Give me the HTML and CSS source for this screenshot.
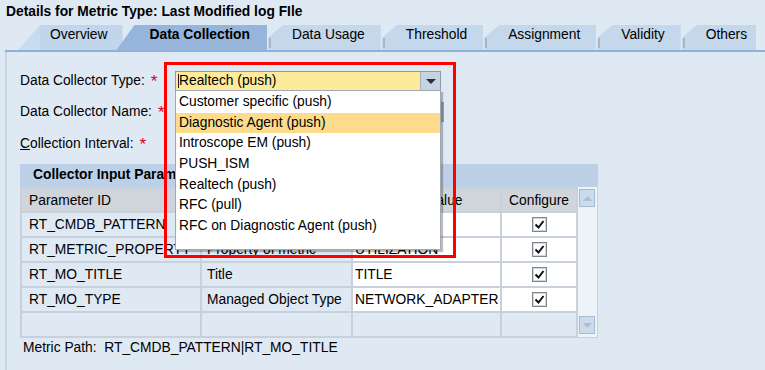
FILE: index.html
```html
<!DOCTYPE html>
<html lang="en">
<head>
    <meta charset="UTF-8">
    <title>Details for Metric Type</title>
    <link rel="stylesheet" href="styles.css">
</head>
<body>

    <h1 class="title">Details for Metric Type: Last Modified log FIle</h1>

    <!-- Tab strip -->
    <div class="tabs">
        <div class="tab tab-first">Overview</div>
        <div class="tab tab-active">Data Collection</div>
        <div class="tab">Data Usage</div>
        <div class="tab">Threshold</div>
        <div class="tab">Assignment</div>
        <div class="tab">Validity</div>
        <div class="tab tab-last">Others</div>
    </div>

    <div class="panel">
        <div class="form-row row-type">
            <label class="label">Data Collector Type:<span class="req">*</span></label>
            <div class="combo">
                <span class="combo-text"><span class="caret"></span>Realtech (push)</span>
                <span class="combo-btn">
                    <svg width="10" height="5" viewBox="0 0 10 5"><polygon points="0,0 10,0 5,5" fill="#2b2f35"/></svg>
                </span>

                <!-- Open list of the combo -->
                <ul class="dropdown">
                    <li>Customer specific (push)</li>
                    <li class="selected">Diagnostic Agent (push)</li>
                    <li>Introscope EM (push)</li>
                    <li>PUSH_ISM</li>
                    <li>Realtech (push)</li>
                    <li>RFC (pull)</li>
                    <li>RFC on Diagnostic Agent (push)</li>
                </ul>

                <!-- Red highlight around the combo -->
                <div class="annot"></div>
            </div>
        </div>

        <div class="form-row row-name">
            <label class="label">Data Collector Name:<span class="req">*</span></label>
            <div class="field field-name"><span class="field-btn"></span></div>
        </div>

        <div class="form-row row-interval">
            <label class="label"><u>C</u>ollection Interval:<span class="req">*</span></label>
            <div class="field field-interval"></div>
        </div>

        <div class="params">
            <div class="params-head">Collector Input Parameters</div>
            <div class="params-body">
                <table class="grid">
                    <colgroup>
                        <col class="w-id">
                        <col class="w-desc">
                        <col class="w-val">
                        <col class="w-cfg">
                    </colgroup>
                    <tr>
                        <th>Parameter ID</th>
                        <th>Description</th>
                        <th>Parameter Value</th>
                        <th class="center">Configure</th>
                    </tr>
                    <tr>
                        <td class="c-id">RT_CMDB_PATTERN</td>
                        <td class="c-desc">CMDB Pattern</td>
                        <td class="c-val">ADAPTER</td>
                        <td class="c-cfg"><span class="check"><svg width="11" height="11" viewBox="0 0 11 11"><polyline points="1.5,5.5 4.5,8.5 9.5,2" fill="none" stroke="#111" stroke-width="2"/></svg></span></td>
                    </tr>
                    <tr>
                        <td class="c-id">RT_METRIC_PROPERTY</td>
                        <td class="c-desc">Property of metric</td>
                        <td class="c-val">UTILIZATION</td>
                        <td class="c-cfg"><span class="check"><svg width="11" height="11" viewBox="0 0 11 11"><polyline points="1.5,5.5 4.5,8.5 9.5,2" fill="none" stroke="#111" stroke-width="2"/></svg></span></td>
                    </tr>
                    <tr>
                        <td class="c-id">RT_MO_TITLE</td>
                        <td class="c-desc">Title</td>
                        <td class="c-val">TITLE</td>
                        <td class="c-cfg"><span class="check"><svg width="11" height="11" viewBox="0 0 11 11"><polyline points="1.5,5.5 4.5,8.5 9.5,2" fill="none" stroke="#111" stroke-width="2"/></svg></span></td>
                    </tr>
                    <tr>
                        <td class="c-id">RT_MO_TYPE</td>
                        <td class="c-desc">Managed Object Type</td>
                        <td class="c-val">NETWORK_ADAPTER</td>
                        <td class="c-cfg"><span class="check"><svg width="11" height="11" viewBox="0 0 11 11"><polyline points="1.5,5.5 4.5,8.5 9.5,2" fill="none" stroke="#111" stroke-width="2"/></svg></span></td>
                    </tr>
                    <tr class="empty">
                        <td></td>
                        <td></td>
                        <td></td>
                        <td></td>
                    </tr>
                </table>

                <div class="vscroll">
                    <span class="scroll-btn"><svg width="9" height="5" viewBox="0 0 9 5"><polygon points="0,5 9,5 4.5,0" fill="#b3bec9"/></svg></span>
                    <span class="scroll-btn"><svg width="9" height="5" viewBox="0 0 9 5"><polygon points="0,0 9,0 4.5,5" fill="#b3bec9"/></svg></span>
                </div>
            </div>
        </div>

        <div class="path">Metric Path:&nbsp; RT_CMDB_PATTERN|RT_MO_TITLE</div>
    </div>

</body>
</html>
```

FILE: styles.css
```css
body {
    margin: 0;
    background-color: #dfe9f4;
    font-family: "Liberation Sans", Arial, sans-serif;
    font-size: 13.8px;
    color: #000;
}

.title {
    margin: 0;
    padding: 4px 6px 5px;
    font-size: 13.8px;
    font-weight: bold;
    line-height: 16px;
}

/* Tabs */
.tabs {
    display: flex;
    margin-left: 5px;
    padding-left: 13px;
    border-bottom: 2px solid #8fb0d8;
}

.tab {
    position: relative;
    height: 25px;
    line-height: 20px;
    margin-left: 1px;
    padding: 0 16px 0 24px;
    background-color: #c4d7eb;
    white-space: nowrap;
    clip-path: polygon(0 13px, 15px 0, 100% 0, 100% 100%, 0 100%);
}

.tab::before {
    content: "";
    position: absolute;
    left: 1px;
    top: 13px;
    width: 2px;
    height: 10px;
    background-color: #a9b6c4;
}

.tab-first {
    margin-left: 0;
    padding: 0 15px 0 32px;
    background: linear-gradient(90deg, #c9dbee 22px, #c2d6eb 22px);
    clip-path: polygon(0 100%, 22px 0, 100% 0, 100% 100%);
}

.tab-first::before,
.tab-active::before {
    display: none;
}

.tab-active {
    z-index: 1;
    margin-left: -6px;
    padding: 0 17px 0 33px;
    background: #95b5da;
    font-weight: bold;
    clip-path: polygon(0 100%, 18px 0, 100% 0, 100% 100%);
}

.tab-last {
    padding-right: 9px;
}

/* Panel */
.panel {
    margin-left: 5px;
    border-left: 2px solid #c6d6e8;
    padding: 19px 0 20px 13px;
}

.form-row {
    display: flex;
    height: 20px;
    line-height: 20px;
}

.row-type {
    margin-bottom: 11px;
}

.row-name {
    margin-bottom: 12px;
}

.row-interval {
    margin-bottom: 10px;
}

.label {
    width: 155px;
    white-space: nowrap;
}

.req {
    margin-left: 6px;
    color: #d8001c;
    font-size: 17px;
    vertical-align: -2px;
}

.combo {
    position: relative;
    display: flex;
    width: 266px;
    height: 20px;
    box-sizing: border-box;
    border: 1px solid #8d9aa9;
    background-color: #fdeb9b;
}

.combo-text {
    flex: 1;
    padding-left: 2px;
    line-height: 18px;
}

.caret {
    display: inline-block;
    width: 1px;
    height: 14px;
    background-color: #1a1a40;
    vertical-align: -3px;
}

.combo-btn {
    display: flex;
    align-items: center;
    justify-content: center;
    width: 19px;
    border-left: 1px solid #a2afbd;
    background-color: #c5d3e2;
}

.dropdown {
    position: absolute;
    z-index: 5;
    left: -1px;
    top: 18px;
    width: 264px;
    margin: 0;
    padding: 1px 0 12px;
    list-style: none;
    background-color: #fff;
    border: 1px solid #a0a8b1;
    box-shadow: 2px 2px 1px rgba(0, 0, 0, 0.25);
}

.dropdown li {
    height: 20.7px;
    line-height: 20.7px;
    padding-left: 3px;
    white-space: nowrap;
}

.dropdown .selected {
    background-color: #fcdc8c;
}

.annot {
    position: absolute;
    z-index: 6;
    left: -12px;
    top: -10px;
    width: 286px;
    height: 190px;
    border: 3px solid #ff0000;
    pointer-events: none;
}

.field {
    position: relative;
    height: 20px;
    box-sizing: border-box;
    border: 1px solid #9aa4ae;
    background-color: #fff;
}

.field-name {
    width: 269px;
}

.field-interval {
    width: 120px;
}

.field-btn {
    position: absolute;
    right: 0;
    top: 0;
    width: 19px;
    height: 18px;
    background-color: #a9b1ba;
}

/* Parameter table */
.params {
    width: 578px;
}

.params-head {
    height: 23px;
    padding-left: 13px;
    line-height: 22px;
    background-color: #bcd1e8;
    font-weight: bold;
}

.params-body {
    display: flex;
}

.grid {
    width: 558px;
    table-layout: fixed;
    border-collapse: separate;
    border-spacing: 2px;
    background-color: #c8d1db;
}

.w-id {
    width: 178px;
}

.w-desc {
    width: 149px;
}

.w-val {
    width: 147px;
}

.w-cfg {
    width: 74px;
}

.grid th {
    height: 22px;
    padding: 0 7px;
    background-color: #cfd5db;
    font-weight: normal;
    text-align: left;
    white-space: nowrap;
}

.grid th.center {
    padding: 0;
    text-align: center;
}

.grid td {
    height: 23px;
    padding: 0 7px;
    background-color: #dfe9f4;
    white-space: nowrap;
    overflow: hidden;
}

.grid td.c-desc {
    padding-left: 5px;
}

.grid td.c-val {
    padding: 0 2px;
    background-color: #fff;
}

.grid td.c-cfg {
    padding: 0;
    background-color: #fff;
    text-align: center;
}

.grid .empty td {
    background-color: #dfe9f4;
}

.check {
    display: inline-flex;
    align-items: center;
    justify-content: center;
    width: 13px;
    height: 13px;
    border: 1px solid #7f868d;
    box-shadow: inset 0 0 0 1px #d4d8dc;
    background-color: #fff;
    vertical-align: middle;
}

.vscroll {
    display: flex;
    flex-direction: column;
    justify-content: space-between;
    width: 20px;
    box-sizing: border-box;
    padding: 2px 2px 3px 1px;
    background-color: #eef3f8;
    border-right: 1px solid #c6d2de;
    border-bottom: 1px solid #c6d2de;
}

.scroll-btn {
    display: flex;
    align-items: center;
    justify-content: center;
    height: 16px;
    border: 1px solid #a6bad0;
    background-color: #c9dbed;
}

.path {
    padding-left: 3px;
    line-height: 20px;
    white-space: pre;
}
```
